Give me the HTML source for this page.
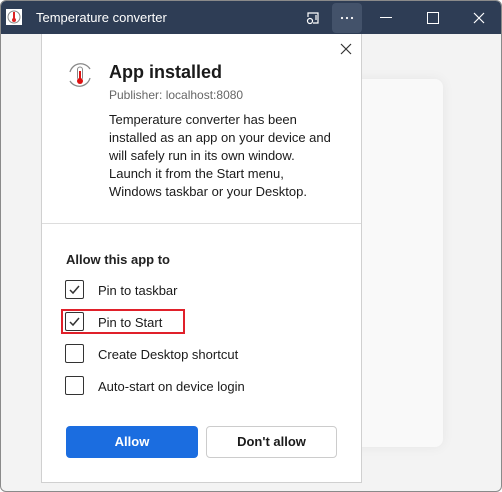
<!DOCTYPE html>
<html><head><style>
body{margin:0;width:502px;height:492px;overflow:hidden;background:#fff;font-family:"Liberation Sans",sans-serif;}
.win{position:absolute;left:0;top:0;width:500px;height:490px;border:1px solid #8a8a8a;border-radius:6px;overflow:hidden;background:#f3f3f3;}
.tb{position:absolute;left:0;top:0;width:500px;height:33px;background:#2e3d55;color:#fff;}
.card{position:absolute;left:222px;top:78px;width:220px;height:368px;background:#f9f9f9;border-radius:8px;box-shadow:0 0 12px rgba(0,0,0,.06);}
.pop{position:absolute;left:40px;top:33px;width:319px;height:448px;background:#fff;border:1px solid #d0d0d0;border-top:none;}
.t{position:absolute;font-size:13px;color:#1a1a1a;}
.cb{position:absolute;left:23px;width:17px;height:17px;border:1px solid #333;border-radius:2px;}
</style></head><body>
<div class="win">
<div class="tb">
<svg style="position:absolute;left:5px;top:8px" width="16" height="16"><rect width="16" height="16" fill="#fff"/><circle cx="8" cy="8" r="6" fill="none" stroke="#888" stroke-width="1"/><rect x="7" y="3" width="2" height="7" fill="#d22"/><circle cx="8" cy="11" r="2" fill="#d22"/></svg>
<div style="position:absolute;left:35px;top:9px;font-size:13px">Temperature converter</div>
<svg style="position:absolute;left:304px;top:9px" width="16" height="16" fill="none" stroke="#fff" stroke-width="1.2"><path d="M3 7V3h10v10H8"/><circle cx="5" cy="11" r="2.5"/><path d="M11 5v5"/></svg>
<div style="position:absolute;left:331px;top:2px;width:30px;height:30px;background:#43526a;border-radius:4px;"><svg width="30" height="30" fill="#fff"><circle cx="10" cy="15" r="1.1"/><circle cx="15" cy="15" r="1.1"/><circle cx="20" cy="15" r="1.1"/></svg></div>
<div style="position:absolute;left:379px;top:16px;width:12px;height:1px;background:#fff"></div>
<div style="position:absolute;left:426px;top:11px;width:10px;height:10px;border:1px solid #fff"></div>
<svg style="position:absolute;left:472px;top:11px" width="12" height="12" stroke="#fff" stroke-width="1.2"><path d="M1 1L11 11M11 1L1 11"/></svg>
</div>
<div class="card"></div>
<div class="pop">
<svg style="position:absolute;left:298px;top:9px" width="12" height="12" stroke="#333" stroke-width="1.2"><path d="M1 1L11 11M11 1L1 11"/></svg>
<svg style="position:absolute;left:24px;top:27px" width="28" height="28" fill="none"><path d="M4 11A11 11 0 0 1 24 8" stroke="#888" stroke-width="1.3"/><path d="M24 17A11 11 0 0 1 4 20" stroke="#888" stroke-width="1.3"/><rect x="11.5" y="6" width="5" height="13" rx="2.5" stroke="#888"/><rect x="13" y="10" width="2" height="9" fill="#d11"/><circle cx="14" cy="20" r="3" fill="#d11"/></svg>
<div class="t" style="left:67px;top:28px;font-size:18px;font-weight:bold">App installed</div>
<div class="t" style="left:67px;top:54px;font-size:12px;color:#666">Publisher: localhost:8080</div>
<div class="t" style="left:67px;top:77px;line-height:18px;width:228px">Temperature converter has been installed as an app on your device and will safely run in its own window. Launch it from the Start menu, Windows taskbar or your Desktop.</div>
<div style="position:absolute;left:0;top:189px;width:319px;height:1px;background:#ddd"></div>
<div class="t" style="left:24px;top:218px;font-weight:bold;color:#222">Allow this app to</div>
<div class="cb" style="top:246px"><svg width="17" height="17" stroke="#333" stroke-width="1.5" fill="none"><path d="M4 9l3 3l6-7"/></svg></div>
<div class="t" style="left:56px;top:249px">Pin to taskbar</div>
<div style="position:absolute;left:19px;top:275px;width:124px;height:25px;border:2px solid #e0202a;box-sizing:border-box"></div>
<div class="cb" style="top:278px"><svg width="17" height="17" stroke="#333" stroke-width="1.5" fill="none"><path d="M4 9l3 3l6-7"/></svg></div>
<div class="t" style="left:56px;top:281px">Pin to Start</div>
<div class="cb" style="top:310px"></div>
<div class="t" style="left:56px;top:313px">Create Desktop shortcut</div>
<div class="cb" style="top:342px"></div>
<div class="t" style="left:56px;top:345px">Auto-start on device login</div>
<div style="position:absolute;left:24px;top:392px;width:132px;height:32px;background:#1b6de0;border-radius:4px;color:#fff;font-weight:bold;font-size:13px;text-align:center;line-height:32px">Allow</div>
<div style="position:absolute;left:164px;top:392px;width:129px;height:30px;border:1px solid #ccc;border-radius:4px;color:#1a1a1a;font-weight:bold;font-size:13px;text-align:center;line-height:30px">Don't allow</div>
</div>
</div>
</body></html>
